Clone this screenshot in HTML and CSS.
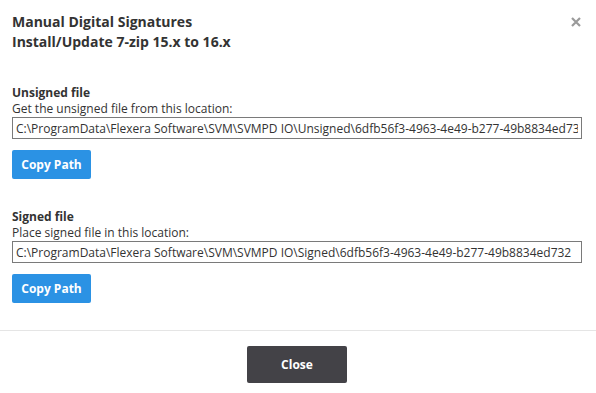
FILE: index.html
```html
<!DOCTYPE html>
<html>
<head>
<meta charset="utf-8">
<link rel="stylesheet" href="styles.css">
</head>
<body>
<div class="dialog">
  <div class="header">
    <h1 class="title">Manual Digital Signatures<br>Install/Update 7-zip 15.x to 16.x</h1>
    <svg class="close-x" width="10" height="10" viewBox="0 0 10 10"><path d="M1 1 L9 9 M9 1 L1 9" stroke="#9a9a9a" stroke-width="2.2" stroke-linecap="butt"/></svg>
  </div>
  <div class="body">
    <div class="section">
      <div class="label">Unsigned file</div>
      <div class="desc">Get the unsigned file from this location:</div>
      <input class="path" type="text" readonly value="C:\ProgramData\Flexera Software\SVM\SVMPD IO\Unsigned\6dfb56f3-4963-4e49-b277-49b8834ed732">
      <button class="btn-copy">Copy Path</button>
    </div>
    <div class="section">
      <div class="label">Signed file</div>
      <div class="desc">Place signed file in this location:</div>
      <input class="path" type="text" readonly value="C:\ProgramData\Flexera Software\SVM\SVMPD IO\Signed\6dfb56f3-4963-4e49-b277-49b8834ed732">
      <button class="btn-copy">Copy Path</button>
    </div>
  </div>
  <div class="footer">
    <button class="btn-close">Close</button>
  </div>
</div>
</body>
</html>
```
FILE: styles.css
```css
html, body {
  margin: 0;
  padding: 0;
  background: #ffffff;
}
body {
  font-family: "Open Sans", "Liberation Sans", sans-serif;
  color: #333;
}
.dialog {
  width: 596px;
  height: 393px;
  display: flex;
  flex-direction: column;
}
.header {
  display: flex;
  justify-content: space-between;
  align-items: flex-start;
  padding: 12px 15px 0 12px;
}
.title {
  margin: 0;
  font-size: 14px;
  line-height: 20px;
  font-weight: 700;
  color: #333;
}
.close-x {
  display: block;
  margin-top: 5px;
}
.body {
  padding: 33px 14px 0 12px;
  display: flex;
  flex-direction: column;
  gap: 30px;
}
.section {
  display: flex;
  flex-direction: column;
  align-items: flex-start;
}
.label {
  font-size: 12px;
  font-weight: 700;
  line-height: 16px;
}
.desc {
  font-size: 12px;
  line-height: 16px;
}
.path {
  box-sizing: border-box;
  width: 570px;
  height: 22px;
  margin: 0;
  padding: 0 3px;
  border: 1px solid #7a7a7a;
  font-family: "Open Sans", "Liberation Sans", sans-serif;
  font-size: 12px;
  color: #333;
  outline: none;
}
.btn-copy {
  margin-top: 11px;
  width: 79px;
  height: 29px;
  border: none;
  border-radius: 2px;
  background: #2b92e4;
  color: #fff;
  font-family: "Open Sans", "Liberation Sans", sans-serif;
  font-size: 12px;
  font-weight: 700;
  padding: 0;
}
.footer {
  margin-top: auto;
  border-top: 1px solid #e5e5e5;
  height: 62px;
  display: flex;
  justify-content: center;
  padding: 15px 2px 0 0;
  box-sizing: border-box;
  margin-bottom: 1px;
}
.btn-close {
  width: 100px;
  height: 37px;
  border: none;
  border-radius: 2px;
  background: #434247;
  color: #fff;
  font-family: "Open Sans", "Liberation Sans", sans-serif;
  font-size: 12px;
  font-weight: 700;
  padding: 0;
}
```
